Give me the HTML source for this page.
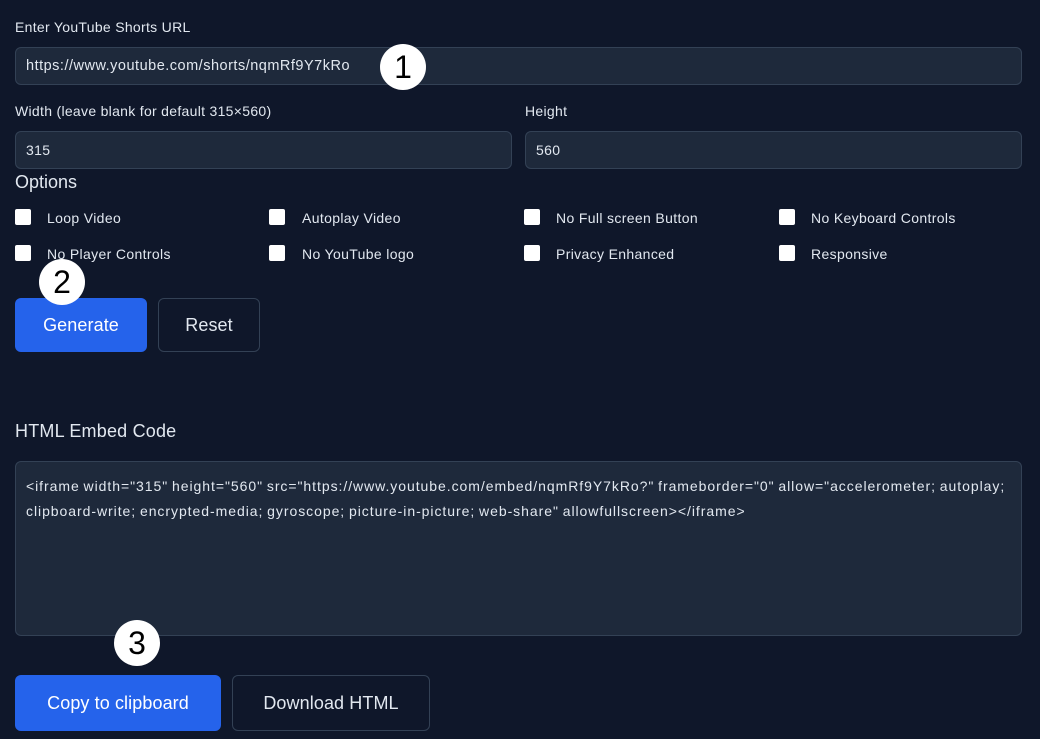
<!DOCTYPE html>
<html><head><meta charset="utf-8"><style>
*{box-sizing:border-box;margin:0;padding:0}
body{width:1040px;height:739px;background:#0f172a;font-family:"Liberation Sans",sans-serif;color:#e2e8f0;position:relative;overflow:hidden}
.a{position:absolute}
.lbl{font-size:14px;color:#e2e8f0;letter-spacing:0.3px}
.inp{background:#1e293b;border:1px solid #334155;border-radius:6px;font-size:14px;color:#e2e8f0;padding-left:10px;display:flex;align-items:center;letter-spacing:0.35px}
.cb{width:16px;height:16px;background:#fff;border-radius:2px}
.ck{font-size:14px;letter-spacing:0.35px}
.btn{border-radius:6px;font-size:18px;display:flex;align-items:center;justify-content:center;color:#fff;letter-spacing:0.1px}
.blue{background:#2563eb}
.out{border:1px solid #334155;color:#e2e8f0}
.c{width:46px;height:46px;border-radius:50%;background:#fff;color:#000;font-size:32px;display:flex;align-items:center;justify-content:center;font-family:"Liberation Sans",sans-serif}
</style></head><body>
<div class="a lbl" style="left:15px;top:19px">Enter YouTube Shorts URL</div>
<div class="a inp" style="left:15px;top:47px;width:1007px;height:38px;font-size:14.5px;letter-spacing:0.5px">https://www.youtube.com/shorts/nqmRf9Y7kRo</div>
<div class="a lbl" style="left:15px;top:103px">Width (leave blank for default 315×560)</div>
<div class="a lbl" style="left:525px;top:103px">Height</div>
<div class="a inp" style="left:15px;top:131px;width:497px;height:38px">315</div>
<div class="a inp" style="left:525px;top:131px;width:497px;height:38px">560</div>
<div class="a" style="left:15px;top:172px;font-size:18px">Options</div>
<div class="a cb" style="left:15px;top:209px"></div><div class="a ck" style="left:47px;top:210px">Loop Video</div>
<div class="a cb" style="left:269px;top:209px"></div><div class="a ck" style="left:302px;top:210px">Autoplay Video</div>
<div class="a cb" style="left:524px;top:209px"></div><div class="a ck" style="left:556px;top:210px">No Full screen Button</div>
<div class="a cb" style="left:779px;top:209px"></div><div class="a ck" style="left:811px;top:210px">No Keyboard Controls</div>
<div class="a cb" style="left:15px;top:245px"></div><div class="a ck" style="left:47px;top:246px">No Player Controls</div>
<div class="a cb" style="left:269px;top:245px"></div><div class="a ck" style="left:302px;top:246px">No YouTube logo</div>
<div class="a cb" style="left:524px;top:245px"></div><div class="a ck" style="left:556px;top:246px">Privacy Enhanced</div>
<div class="a cb" style="left:779px;top:245px"></div><div class="a ck" style="left:811px;top:246px">Responsive</div>
<div class="a btn blue" style="left:15px;top:298px;width:132px;height:54px">Generate</div>
<div class="a btn out" style="left:158px;top:298px;width:102px;height:54px">Reset</div>
<div class="a" style="left:15px;top:421px;font-size:18px;letter-spacing:0.2px">HTML Embed Code</div>
<div class="a inp" style="left:15px;top:461px;width:1007px;height:175px;padding:12px 1px 12px 10px;font-size:14px;line-height:25px;display:block;letter-spacing:0.95px;word-spacing:-1px">&lt;iframe width="315" height="560" src="https://www.youtube.com/embed/nqmRf9Y7kRo?" frameborder="0" allow="accelerometer; autoplay; clipboard-write; encrypted-media; gyroscope; picture-in-picture; web-share" allowfullscreen&gt;&lt;/iframe&gt;</div>
<div class="a btn blue" style="left:15px;top:675px;width:206px;height:56px">Copy to clipboard</div>
<div class="a btn out" style="left:232px;top:675px;width:198px;height:56px">Download HTML</div>
<div class="a c" style="left:380px;top:44px">1</div>
<div class="a c" style="left:39px;top:259px">2</div>
<div class="a c" style="left:114px;top:620px">3</div>
</body></html>
